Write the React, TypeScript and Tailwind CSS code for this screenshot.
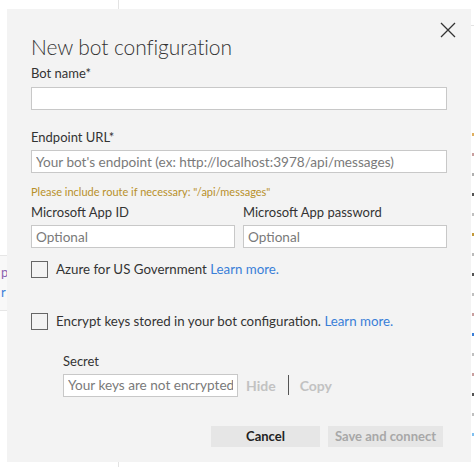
import React from 'react';

const font = { fontFamily: 'Lato, "Open Sans", sans-serif' };

const Checkbox: React.FC<{ label: string }> = ({ label }) => (
  <label className="flex items-center gap-2 text-[13.3px] text-[#333]">
    <span className="h-[17px] w-[17px] shrink-0 border border-[#666] bg-transparent" />
    <span>
      {label} <span className="text-[#3a7fd8]">Learn more.</span>
    </span>
  </label>
);

const TextInput: React.FC<{ placeholder?: string; className?: string }> = ({ placeholder, className = '' }) => (
  <input
    className={`h-[23px] border border-[#c8c8c8] bg-white px-[4px] text-[13.6px] text-[#333] outline-none placeholder:text-[#7a7a7a] ${className}`}
    placeholder={placeholder}
  />
);

// bits of the page that peek out on the right of the dialog
const marks = ['#e0b060', '#c9a0a0', '#b0b0b0', '#555', '#c0c0c0', '#c49a3a', '#bbb', '#555', '#c0c0c0', '#c9a0a0', '#3a7fd8', '#c0c0c0', '#c9a0a0', '#555', '#c0c0c0', '#80c0f0'];

const App: React.FC = () => {
  return (
    <div className="relative h-[467px] w-[474px] overflow-hidden bg-white" style={font}>
      {/* page behind the dialog */}
      <div className="absolute left-[118px] top-0 h-full w-px bg-[#e3e3e3]" />
      <div className="absolute left-0 top-[255px] h-[56px] w-[20px] border-y border-[#e6e6e6] bg-[#f8f8f8] pl-[1px] text-[13px] leading-[20px]">
        <div className="pt-[6px] text-[#8a62b0]">p</div>
        <div className="text-[#3a7fd8]">r</div>
      </div>
      <div className="absolute left-[468px] top-[25px] h-px w-[6px] bg-[#e3e3e3]" />
      <div className="absolute left-[472px] top-[133px] flex flex-col gap-[17px]">
        {marks.map((c, i) => (
          <span key={i} className="block h-[3px] w-[2px]" style={{ background: c }} />
        ))}
      </div>

      {/* dialog */}
      <div className="absolute left-[7px] top-[9px] h-[453px] w-[464px] bg-[#f3f3f3] px-[24px] pt-[23px]">
        <button className="absolute right-[15px] top-[13px] h-[16px] w-[16px] text-[#333]">
          <svg viewBox="0 0 16 16" className="h-[16px] w-[16px]" fill="none" stroke="currentColor" strokeWidth="1.3">
            <path d="M1 1 L15 15 M15 1 L1 15" />
          </svg>
        </button>

        <h1 className="text-[21px] font-light leading-[29px] tracking-[-0.1px] text-[#333]">New bot configuration</h1>

        <div className="mt-[3px] text-[13px] leading-[18px] text-[#333]">Bot name*</div>
        <TextInput className="mt-[5px] w-full" />

        <div className="mt-[18px] text-[13px] leading-[18px] text-[#333]">Endpoint URL*</div>
        <TextInput className="mt-[4px] w-full" placeholder="Your bot's endpoint (ex: http://localhost:3978/api/messages)" />

        <div className="mt-[12px] text-[11px] leading-[14px] text-[#b8902a]">
          Please include route if necessary: "/api/messages"
        </div>

        <div className="mt-[4px] grid grid-cols-2 gap-x-[8px]">
          <div>
            <div className="text-[13px] leading-[18px] text-[#333]">Microsoft App ID</div>
            <TextInput className="mt-[4px] w-full" placeholder="Optional" />
          </div>
          <div>
            <div className="text-[13px] leading-[18px] text-[#333]">Microsoft App password</div>
            <TextInput className="mt-[4px] w-full" placeholder="Optional" />
          </div>
        </div>

        <div className="mt-[12px] flex flex-col gap-[32px]">
          <Checkbox label="Azure for US Government" />
          <Checkbox label="Encrypt keys stored in your bot configuration." />
        </div>

        <div className="ml-[32px] mt-[20px]">
          <div className="text-[13px] leading-[18px] text-[#333]">Secret</div>
          <div className="mt-[4px] flex items-center">
            <TextInput className="w-[175px]" placeholder="Your keys are not encrypted" />
            <span className="ml-[8px] text-[14px] font-bold text-[#c2c2c2]">Hide</span>
            <span className="ml-[12px] h-[20px] w-px bg-[#555]" />
            <span className="ml-[11px] text-[14px] font-bold text-[#c2c2c2]">Copy</span>
          </div>
        </div>

        <div className="mt-[29px] flex justify-end gap-[8px] pr-[4px]">
          <button className="h-[21px] w-[109px] bg-[#e6e6e6] text-[13px] font-bold text-[#222]">Cancel</button>
          <button className="h-[21px] w-[115px] bg-[#e6e6e6] text-[13px] font-bold text-[#a8a8a8]">Save and connect</button>
        </div>
      </div>
    </div>
  );
};

export default App;
